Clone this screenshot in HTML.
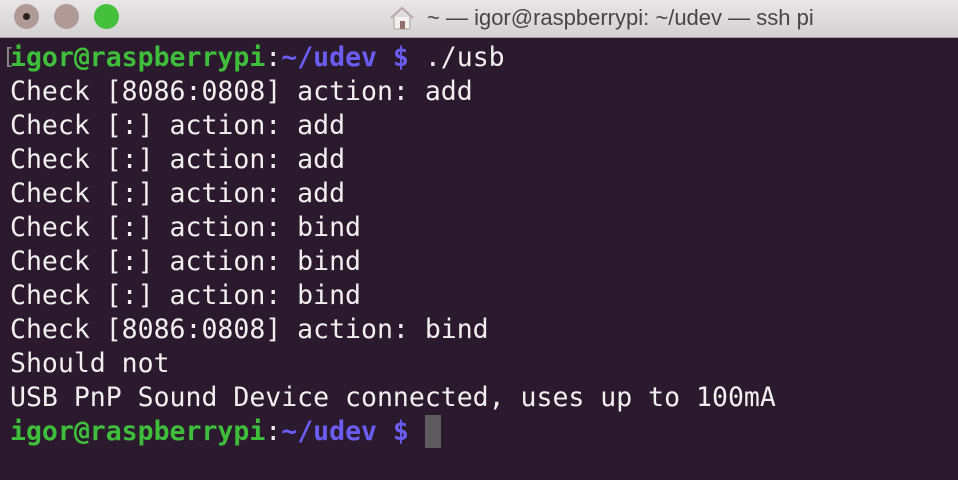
<!DOCTYPE html>
<html><head><meta charset="utf-8"><style>
html,body{margin:0;padding:0;width:958px;height:480px;overflow:hidden;background:#2b1a2d}
.bar{position:absolute;left:0;top:0;width:958px;height:37px;background:linear-gradient(#e8e6e6,#d3d1d1);border-bottom:1px solid #a89a9a}
.dot{position:absolute;top:4px;width:25px;height:25px;border-radius:50%}
.title{position:absolute;left:427px;top:5px;font:22px "Liberation Sans",sans-serif;color:#4a4446;white-space:pre}
.term{position:absolute;left:10px;top:41px;font-family:"DejaVu Sans Mono","Liberation Mono",monospace;font-size:26.5px;line-height:34px;color:#f2f0ee;white-space:pre}
.g{color:#3fbe3c;font-weight:bold}.b{color:#6a5df2;font-weight:bold}
.cur{display:inline-block;width:16px;height:33px;background:#5f5a5e;vertical-align:top;margin-top:0px}
.br{position:absolute;left:-8px;top:0;color:#888;font-weight:normal;font-size:22px}
</style></head><body>
<div class="bar">
<div class="dot" style="left:14px;background:#b09a96"><div style="position:absolute;left:9px;top:9px;width:7px;height:7px;border-radius:50%;background:#2a2020"></div></div>
<div class="dot" style="left:54px;background:#b09a96"></div>
<div class="dot" style="left:94px;background:#44c03c"></div>
<svg style="position:absolute;left:389px;top:5px" width="26" height="26" viewBox="0 0 26 26"><path d="M2 13 L13 3 L24 13" fill="none" stroke="#b9a8a6" stroke-width="2"/><path d="M5 12 V24 H21 V12" fill="#f3f0ee" stroke="#c0b2b0" stroke-width="1.5"/><rect x="11" y="16" width="5" height="8" fill="#8f6f6c"/></svg>
<div class="title">~ — igor@raspberrypi: ~/udev — ssh pi</div>
</div>
<div class="term"><span class="br">[</span><span class="g">igor@raspberrypi</span>:<span class="b">~/udev $</span> ./usb
Check [8086:0808] action: add
Check [:] action: add
Check [:] action: add
Check [:] action: add
Check [:] action: bind
Check [:] action: bind
Check [:] action: bind
Check [8086:0808] action: bind
Should not
USB PnP Sound Device connected, uses up to 100mA
<span class="g">igor@raspberrypi</span>:<span class="b">~/udev $</span> <span class="cur"></span></div>
</body></html>
